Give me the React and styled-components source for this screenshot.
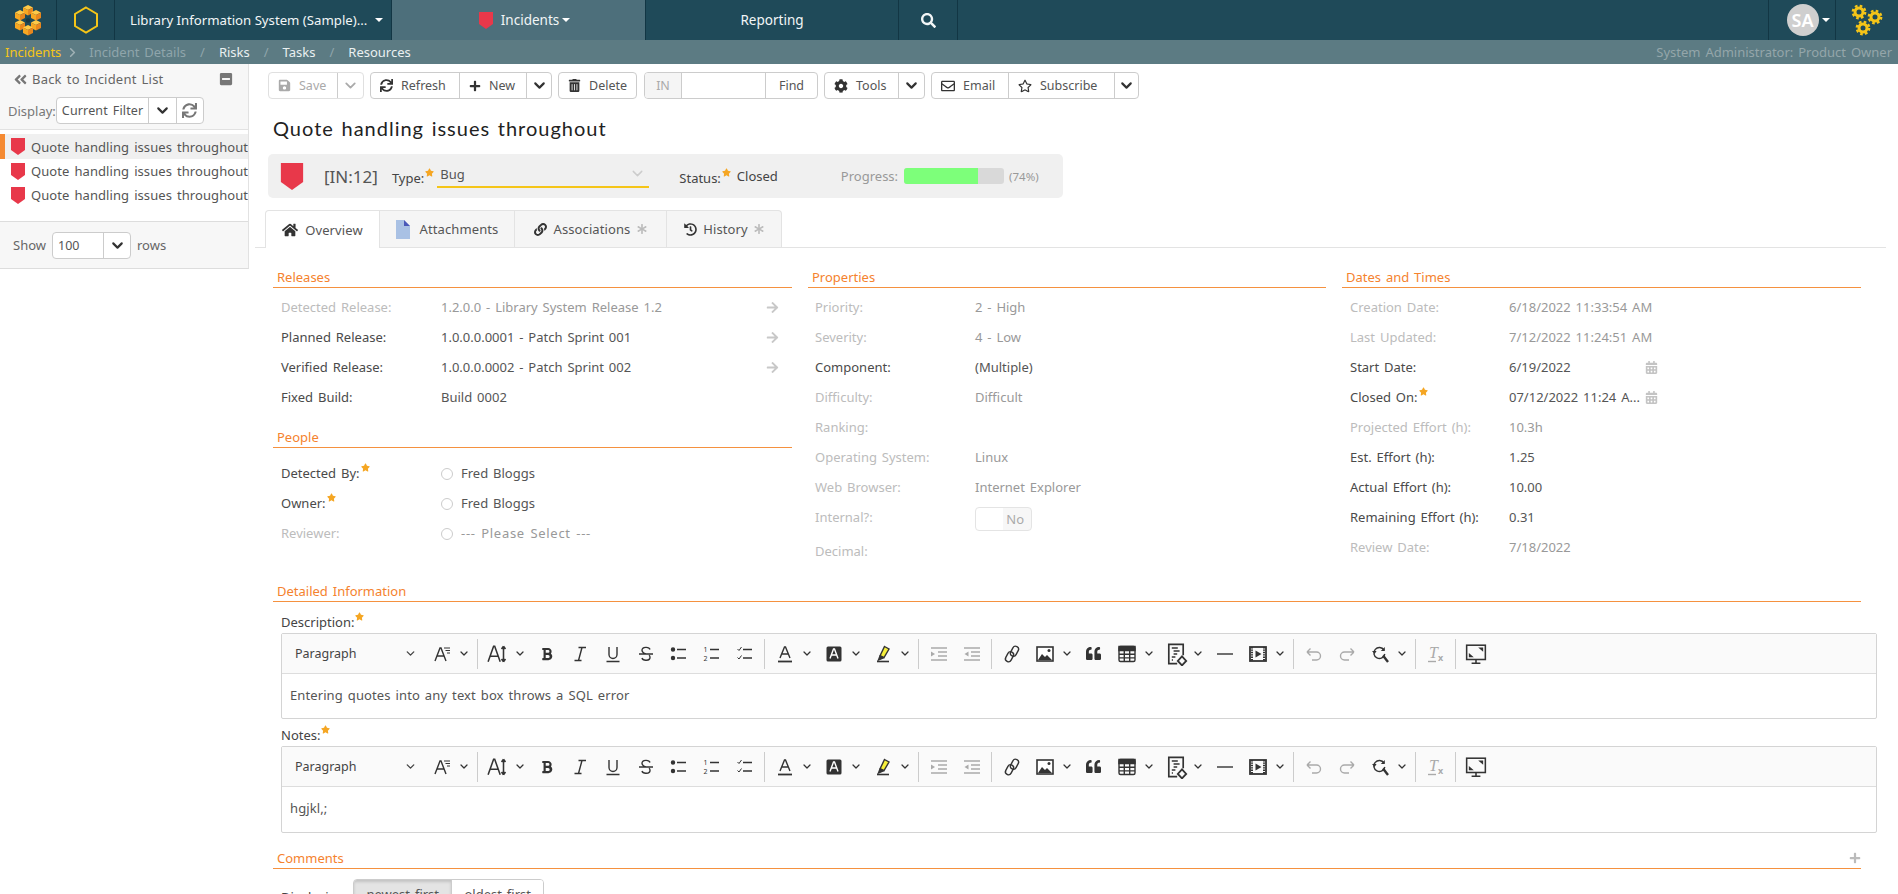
import React from 'react';
import styled, { createGlobalStyle } from 'styled-components';
import { ChevronDown, ChevronRight } from 'lucide-react';
import {
  FaSave, FaSync, FaPlus, FaTrashAlt, FaCog, FaRegEnvelope, FaRegStar, FaHome, FaLink, FaHistory, FaBold,
  FaSearch, FaAngleDoubleLeft, FaMinusSquare, FaCalendarAlt, FaArrowRight, FaAsterisk, FaStar, FaQuoteLeft,
} from 'react-icons/fa';

const GlobalStyle = createGlobalStyle`
  html, body {
    margin: 0;
    height: 100%;
    overflow: hidden;
    background: #fff;
  }
  body {
    font-family: "Noto Sans", "Open Sans", sans-serif;
    font-size: 13px;
    word-spacing: 1.5px;
    color: #444;
  }
  * { box-sizing: border-box; }
`;

const Page = styled.div`
  height: 894px;
  overflow: hidden;
  display: flex;
  flex-direction: column;
`;

const NavBar = styled.div`
  display: flex;
  height: 40px;
  background: #1f4a59;
  color: #fff;
  flex: none;
`;

const NavItem = styled.div`
  width: ${p => p.$w}px;
  display: flex;
  align-items: center;
  justify-content: ${p => p.$left ? 'flex-start' : 'center'};
  gap: ${p => p.$gap ?? 5}px;
  padding-left: ${p => p.$pl ?? (p.$left ? 15 : 0)}px;
  border-right: 1px solid #123644;
  background: ${p => p.$active ? '#4d6f7b' : 'transparent'};
  font-size: ${p => p.$left ? 13.2 : 13.5}px;
  word-spacing: ${p => p.$left ? 0 : 1.5}px;
  color: #f2f6f7;
  white-space: nowrap;
`;

const NavSpacer = styled.div`
  flex: 1;
  border-right: 1px solid #123644;
`;

const Caret = styled.span`
  width: 0;
  height: 0;
  border-left: 4px solid transparent;
  border-right: 4px solid transparent;
  border-top: 4px solid #fff;
  margin-left: ${p => p.$ml || 0}px;
`;

const Avatar = styled.div`
  width: 32px;
  height: 32px;
  border-radius: 50%;
  background: #cfcfcf;
  color: #fff;
  font-size: 18px;
  font-weight: 600;
  display: flex;
  align-items: center;
  justify-content: center;
`;

const SubBar = styled.div`
  display: flex;
  align-items: center;
  height: 24px;
  flex: none;
  background: #5c7b83;
  padding: 0 6px 0 5px;
  font-size: 13px;
`;

const Crumb = styled.span`
  color: ${p => p.$color || '#eaf0f1'};
`;

const Slash = styled.span`
  color: #8fa5ab;
  margin: 0 14px;
`;

const SubBarUser = styled.span`
  margin-left: auto;
  color: #94a6aa;
`;

const Body = styled.div`
  display: flex;
  flex: 1;
  min-height: 0;
`;

const Side = styled.aside`
  width: 249px;
  flex: none;
  align-self: flex-start;
  border-right: 1px solid #e2e2e2;
  border-bottom: 1px solid #ddd;
  background: #f7f7f7;
`;

const SideTop = styled.div`
  height: 66px;
  padding: 7px 0 0 8px;
  border-bottom: 1px solid #e2e2e2;
`;

const BackRow = styled.div`
  display: flex;
  align-items: center;
  height: 16px;
  padding: 0 15px 0 5px;
  color: #666;
  gap: 4px;
  letter-spacing: 0.2px;
  svg:first-child { font-size: 15px; color: #777; }
  svg:last-child { margin-left: auto; font-size: 14px; color: #777; }
`;

const DisplayRow = styled.div`
  display: flex;
  align-items: center;
  margin-top: 10px;
  color: #777;
`;

const ButtonGroup = styled.div`
  display: flex;
  height: ${p => p.$h || 27}px;
  width: ${p => p.$w ? p.$w + 'px' : 'auto'};
  flex: none;
  border: 1px solid ${p => p.$faded ? '#e0e0e0' : '#ccc'};
  border-radius: 4px;
  background: #fff;
  overflow: hidden;
`;

const GroupCell = styled.div`
  width: ${p => p.$w}px;
  flex: none;
  display: flex;
  align-items: center;
  justify-content: ${p => p.$center ? 'center' : 'flex-start'};
  gap: 8px;
  padding-left: ${p => p.$center ? 0 : p.$pl ?? 9}px;
  font-size: 12.5px;
  color: ${p => p.$faded ? '#aaa' : '#555'};
  background: ${p => p.$bg || 'transparent'};
  border-right: ${p => p.$last ? 'none' : '1px solid #ccc'};
  white-space: nowrap;
  svg { flex: none; color: ${p => p.$faded ? '#aaa' : '#333'}; }
`;

const SideList = styled.div`
  background: #fff;
  height: 91px;
  padding-top: 4px;
`;

const SideRow = styled.div`
  display: flex;
  align-items: center;
  height: ${p => p.$sel ? 25 : 24}px;
  gap: 6px;
  padding-left: 11px;
  overflow: hidden;
  white-space: nowrap;
  color: #555;
  background: ${p => p.$sel ? '#f0f0f0' : 'transparent'};
  box-shadow: ${p => p.$sel ? 'inset 5px 0 0 #f58a32' : 'none'};
  letter-spacing: 0.08px;
`;

const SideFoot = styled.div`
  height: 47px;
  display: flex;
  align-items: center;
  gap: 6px;
  padding: 0 13px;
  border-top: 1px solid #ddd;
  color: #666;
`;

const Main = styled.main`
  flex: 1;
  min-width: 0;
  padding: 8px 13px 0 6px;
`;

const ToolBar = styled.div`
  display: flex;
  gap: 6px;
  padding-left: 13px;
`;

const Title = styled.h1`
  margin: 16px 0 0 18px;
  height: 27px;
  line-height: 27px;
  font-family: Lato, sans-serif;
  font-weight: 400;
  font-size: 20px;
  letter-spacing: 1px;
  color: #222;
`;

const InfoBar = styled.div`
  width: 795px;
  height: 44px;
  margin: 12px 0 0 13px;
  background: #f0f0f0;
  border-radius: 5px;
  display: flex;
  align-items: center;
  position: relative;
`;

const Ref = styled.span`
  font-size: 17px;
  color: #555;
  margin: 0 14px 0 18px;
`;

const Field = styled.span`
  color: ${p => p.$muted ? '#999' : '#444'};
  margin-left: ${p => p.$ml || 0}px;
  margin-top: ${p => p.$mt || 0}px;
`;

const Req = styled(FaStar)`
  color: #f5a623;
  font-size: 9px;
  vertical-align: 6px;
  margin-left: 1px;
`;

const TypeBox = styled.div`
  width: 212px;
  height: 26px;
  margin: -3px 0 0 3px;
  padding: 0 3px;
  border-bottom: 2px solid #f5c518;
  display: flex;
  align-items: center;
  justify-content: space-between;
  color: #555;
`;

const ProgressTrack = styled.div`
  width: 100px;
  height: 16px;
  margin: 0 5px 0 6px;
  background: #d9d9d9;
  border-radius: 3px;
  overflow: hidden;
`;

const ProgressFill = styled.div`
  height: 100%;
  background: #7dff7a;
`;

const Tabs = styled.div`
  display: flex;
  height: 38px;
  margin-top: 12px;
  padding-left: 10px;
  border-bottom: 1px solid #e3e3e3;
  width: 1631px;
  margin-left: 0;
`;

const Tab = styled.div`
  width: ${p => p.$w}px;
  height: ${p => p.$active ? 38 : 37}px;
  display: flex;
  align-items: center;
  justify-content: center;
  gap: ${p => p.$gap || 6}px;
  background: ${p => p.$active ? '#fff' : '#f5f5f5'};
  border: 1px solid #e3e3e3;
  border-width: 1px 1px 0 ${p => p.$first ? 1 : 0}px;
  border-radius: ${p => p.$first ? '4px 0 0 0' : p.$last ? '0 4px 0 0' : '0'};
  color: #555;
  letter-spacing: 0.1px;
`;

const Columns = styled.div`
  display: grid;
  grid-template-columns: 519px 518px 519px;
  column-gap: 16px;
  margin: 18px 0 0 18px;
`;

const SectionTitle = styled.div`
  height: 22px;
  line-height: 20px;
  margin-top: ${p => p.$mt || 0}px;
  padding-left: 4px;
  font-size: 13px;
  color: #f5822e;
  border-bottom: 1px solid #f5913f;
  display: flex;
  justify-content: space-between;
  align-items: center;
`;

const RowList = styled.div`
  padding-top: ${p => p.$pt || 4}px;
`;

const Row = styled.div`
  display: flex;
  height: ${p => p.$h || 30}px;
  line-height: 30px;
  padding-left: ${p => p.$pl || 8}px;
  align-items: flex-start;
`;

const Label = styled.div`
  width: ${p => p.$w || 160}px;
  flex: none;
  color: ${p => p.$on ? '#4a4a4a' : '#bcbcbc'};
`;

const Value = styled.div`
  flex: 1;
  display: flex;
  align-items: center;
  height: 30px;
  color: ${p => p.$faded ? '#999' : '#555'};
  letter-spacing: ${p => p.$wide ? 0.7 : 0}px;
`;

const ArrowCell = styled(FaArrowRight)`
  margin-left: auto;
  margin-right: 13px;
  font-size: 13px;
  color: #c8c8c8;
`;

const Radio = styled.span`
  width: 12px;
  height: 12px;
  border-radius: 50%;
  border: 1px solid #ccc;
  margin: 2px 8px 0 0;
  flex: none;
`;

const Toggle = styled.div`
  width: 57px;
  height: 24px;
  margin-top: 5px;
  border: 1px solid #e4e4e4;
  border-radius: 4px;
  display: flex;
  align-items: center;
  justify-content: flex-end;
  padding-right: 7px;
  line-height: 1;
  color: #aaa;
  background: linear-gradient(90deg, #fff 50%, #f7f7f7 50%);
`;

const DateText = styled.span`
  width: ${p => p.$w}px;
  white-space: nowrap;
  flex: none;
`;

const CalIcon = styled(FaCalendarAlt)`
  font-size: 13px;
  color: #c4c4c4;
`;

const Wide = styled.div`
  width: 1588px;
  margin-left: 18px;
`;

const FieldLabel = styled.div`
  height: 20px;
  line-height: 20px;
  margin: ${p => p.$mt || 0}px 0 1px 8px;
  color: #444;
`;

const Editor = styled.div`
  margin-left: 8px;
  width: 1596px;
  border: 1px solid #d4d4d4;
  border-radius: 2px;
`;

const EditorBar = styled.div`
  height: 40px;
  display: flex;
  align-items: center;
  background: #fafafa;
  border-bottom: 1px solid #ddd;
  color: #333;
`;

const ParagraphPick = styled.div`
  width: 142px;
  margin-left: 1px;
  padding: 0 8px 0 12px;
  display: flex;
  align-items: center;
  justify-content: space-between;
  font-size: 12.5px;
  color: #444;
`;

const Tool = styled.div`
  width: 33px;
  height: 32px;
  flex: none;
  display: flex;
  align-items: center;
  justify-content: center;
  color: ${p => p.$off ? '#aaa' : '#333'};
`;

const Chev = styled.div`
  width: 12px;
  margin-right: 4px;
  flex: none;
  display: flex;
  justify-content: center;
  color: #333;
`;

const Sep = styled.div`
  width: 1px;
  height: 30px;
  margin: 0 3px;
  flex: none;
  background: #ccc;
`;

const EditorText = styled.div`
  height: ${p => p.$h}px;
  padding: 10px 8px 0;
  line-height: 22px;
  color: #555;
  letter-spacing: 0.1px;
`;

const CommentRow = styled.div`
  display: flex;
  align-items: flex-start;
  gap: 5px;
  margin: 10px 0 0 8px;
  line-height: 36px;
`;

const SortBtn = styled.div`
  width: ${p => p.$w}px;
  height: 28px;
  line-height: 28px;
  text-align: center;
  color: #555;
  background: ${p => p.$on ? '#e4e4e4' : '#fff'};
  box-shadow: ${p => p.$on ? 'inset 0 2px 3px rgba(0,0,0,.15)' : 'none'};
  border-right: ${p => p.$on ? '1px solid #ccc' : 'none'};
`;

const Plus = styled(FaPlus)`
  font-size: 12px;
  color: #bbb;
  margin-right: 0;
`;

const Ico = styled.svg.attrs(p => ({
  width: p.$s || 20,
  height: p.$s || 20,
  viewBox: '0 0 20 20',
  fill: 'none',
  stroke: 'currentColor',
  strokeWidth: 1.4,
}))`
  display: block;
`;

const Shield = ({ w = 14, h = 17 }) => (
  <svg width={w} height={h} viewBox="0 0 14 17" style={{ flex: 'none' }}>
    <path d="M0 0h14v12l-7 5-7-5z" fill="#e8384a" />
  </svg>
);

const Cube = ({ x, y, c = '#f7a823' }) => (
  <g transform={`translate(${x} ${y})`}>
    <path d="M0-5 5-2.5 0 0-5-2.5z" fill="#ffc947" />
    <path d="M-5-2.5 0 0V5.5L-5 3z" fill={c} />
    <path d="M5-2.5 0 0V5.5L5 3z" fill="#e8871e" />
  </g>
);

const Logo = () => (
  <svg width="30" height="33" viewBox="0 0 30 33">
    <Cube x={15} y={6} />
    <Cube x={7} y={11} />
    <Cube x={23} y={11} />
    <Cube x={7} y={21} />
    <Cube x={23} y={21} />
    <Cube x={15} y={26} />
    <circle cx="15" cy="16.5" r="2.2" fill="#173a46" />
  </svg>
);

const HexMark = () => (
  <svg width="26" height="28" viewBox="0 0 26 28">
    <path d="M13 1.5 24 8v12l-11 6.5L2 20V8z" fill="none" stroke="#f5c518" strokeWidth="2" />
  </svg>
);

const Gear = ({ x, y }) => (
  <g transform={`translate(${x} ${y})`} fill="none" stroke="#f5c518">
    <circle r="4" strokeWidth="3" />
    <circle r="6.2" strokeWidth="2.4" strokeDasharray="2.6 2.27" />
  </g>
);

const Gears = () => (
  <svg width="34" height="40" viewBox="0 0 34 40">
    <Gear x={9} y={12} />
    <Gear x={25} y={17} />
    <Gear x={13} y={28} />
  </svg>
);

const FileIcon = () => (
  <svg width="14" height="19" viewBox="0 0 14 19">
    <path d="M0 0h8l6 6v13H0z" fill="#a9c1e4" />
    <path d="M8 0l6 6H8z" fill="#4a58b8" />
  </svg>
);

const SmallChevron = () => <ChevronDown size={13} strokeWidth={2.5} />;
const DownBold = () => <ChevronDown size={17} strokeWidth={3} color="#333" />;

const StyleIcon = () => (
  <Ico><path d="M3 17 8 4h1l5 13M5 12h7" /><path d="M12 4h6M13.5 6.5H18M15 9h3" strokeWidth="1" /></Ico>
);
const SizeIcon = () => (
  <Ico $s={22}><path d="M1 17 6 3h1l5 14M3 12h7" /><path d="M15 3v14M15 3l-1.8 2.5M15 3l1.8 2.5M15 17l-1.8-2.5M15 17l1.8-2.5" /></Ico>
);
const ItalicIcon = () => <Ico strokeWidth="1.3"><path d="M8.5 3.5h7.5M12 3.5 8.5 16.5M4.5 16.5h7" /></Ico>;
const UnderlineIcon = () => <Ico><path d="M6 3v7.5a4 4 0 0 0 8 0V3M3.5 17.5h13" /></Ico>;
const StrikeIcon = () => (
  <Ico><path d="M14 5.5c-.8-3-8-3-8 .8 0 2 2 3 4 3.7M6 14c.8 3.2 8.2 3 8-.8 0-.8-.3-1.5-1-2M3 10h14" /></Ico>
);
const BulletIcon = () => (
  <Ico strokeWidth="1.6"><circle cx="4" cy="5.5" r="1.5" fill="currentColor" /><circle cx="4" cy="14" r="1.5" fill="currentColor" /><path d="M8 5.5h9M8 14h9" /></Ico>
);
const NumberIcon = () => (
  <Ico strokeWidth="1.6">
    <text x="1.5" y="8" fontSize="7" fill="currentColor" stroke="none" fontFamily="Noto Sans">1</text>
    <text x="1.5" y="17" fontSize="7" fill="currentColor" stroke="none" fontFamily="Noto Sans">2</text>
    <path d="M8 5.5h9M8 14h9" />
  </Ico>
);
const TodoIcon = () => (
  <Ico strokeWidth="1.3"><path d="M2.5 5 4 6.5 6.5 3M2.5 13.5 4 15l2.5-3.5" strokeWidth="1" /><path d="M8 5.5h9M8 14h9" strokeWidth="1.6" /></Ico>
);
const FontColorIcon = () => (
  <Ico><path d="M5 14 9.5 3h1L15 14M6.7 10h6.6" /><path d="M3 17.5h14" strokeWidth="1.8" /></Ico>
);
const FontBgIcon = () => (
  <Ico><rect x="2.5" y="2.5" width="15" height="15" rx="1.5" fill="#333" stroke="none" /><path d="M6 14.5 9.5 5h1l3.5 9.5M7.2 11h5.6" stroke="#fff" /></Ico>
);
const HighlightIcon = () => (
  <Ico>
    <path d="M11.5 2.5 16 5l-5 8.5-3.8-2z" fill="#f6ef3a" stroke="#333" />
    <path d="M7.2 11.5 5.5 16l5.5-2.5" fill="#333" />
    <path d="M4 17.5h12" strokeWidth="1.6" />
  </Ico>
);
const IndentIcon = () => (
  <Ico strokeWidth="1.2"><path d="M2 4h16M9 8h9M9 12h9M2 16h16" /><path d="M2 7.5 6 10l-4 2.5z" fill="currentColor" stroke="none" /></Ico>
);
const OutdentIcon = () => (
  <Ico strokeWidth="1.2"><path d="M2 4h16M9 8h9M9 12h9M2 16h16" /><path d="M6.5 7.5 2.5 10l4 2.5z" fill="currentColor" stroke="none" /></Ico>
);
const LinkIcon = () => (
  <Ico strokeWidth="1.2">
    <rect x="9.5" y="2" width="6" height="10.5" rx="3" transform="rotate(28 12.5 7.2)" />
    <rect x="4.5" y="7.5" width="6" height="10.5" rx="3" transform="rotate(28 7.5 12.8)" />
  </Ico>
);
const ImageIcon = () => (
  <Ico>
    <rect x="2" y="3" width="16" height="14" fill="#fff" stroke="#333" strokeWidth="1.6" />
    <path d="M3 16l4-6 3 3 2-2 5 5z" fill="#333" stroke="none" />
    <circle cx="14" cy="6.5" r="1.5" fill="#333" stroke="none" />
  </Ico>
);
const TableIcon = () => (
  <Ico strokeWidth="1.1">
    <rect x="2" y="2.5" width="16" height="15" rx="1.5" stroke="#333" />
    <path d="M2 2.5h16v4H2z" fill="#333" />
    <path d="M7.3 6.5v11M12.7 6.5v11M2 10.2h16M2 13.9h16" />
  </Ico>
);
const SourceIcon = () => (
  <Ico $s={24} strokeWidth="1">
    <path d="M11 18H4V2h12v9" />
    <path d="M6.5 5h5M8 7.5h5M8 10h3M6.5 12.5h3M6.5 15h1" />
    <path d="M15 12 11.5 15.8 15 19.5 18.5 15.8z" strokeWidth="1.5" />
  </Ico>
);
const RuleIcon = () => <Ico strokeWidth="2"><path d="M2 10h16" /></Ico>;
const MediaIcon = () => (
  <Ico>
    <rect x="2" y="3" width="16" height="14" stroke="#333" strokeWidth="1.8" />
    <path d="M4 3v14M16 3v14" strokeWidth="2" strokeDasharray="1.4 1" />
    <path d="M7.5 6.5 13.5 10l-6 3.5z" fill="#333" stroke="none" />
  </Ico>
);
const UndoIcon = () => <Ico strokeWidth="1.2"><path d="M3 8h9.5a3.6 3.6 0 0 1 0 8H8M3 8l3.5-3.5M3 8l3.5 3.5" /></Ico>;
const RedoIcon = () => <Ico strokeWidth="1.2"><path d="M17 8H7.5a3.6 3.6 0 0 0 0 8H12M17 8l-3.5-3.5M17 8l-3.5 3.5" /></Ico>;
const FindIcon = () => (
  <Ico strokeWidth="1.7">
    <path d="M14 6a5.5 5.5 0 1 0 .8 4" />
    <path d="M13 11.5 18 18" strokeWidth="2.4" />
    <path d="M2 7l2.6 3 2-3z M14.8 3v4h-4z" fill="currentColor" stroke="none" />
  </Ico>
);
const ClearIcon = () => (
  <Ico strokeWidth="1">
    <text x="3" y="14" fontSize="16" fontStyle="italic" fontFamily="Liberation Serif" fill="currentColor" stroke="none">T</text>
    <text x="12" y="17" fontSize="9" fontWeight="700" fontFamily="Noto Sans" fill="currentColor" stroke="none">x</text>
    <path d="M2 17.5h8" />
  </Ico>
);
const FullIcon = () => (
  <Ico $s={22} strokeWidth="1.5">
    <rect x="1.5" y="2" width="17" height="13" />
    <path d="M10 15v3M6 18.5h8" />
    <path d="M12 4h4.5v4zM8 13H3.5V9z" fill="currentColor" stroke="none" />
  </Ico>
);

const EditorToolbar = () => (
  <EditorBar>
    <ParagraphPick>Paragraph <SmallChevron /></ParagraphPick>
    <Tool><StyleIcon /></Tool><Chev><SmallChevron /></Chev>
    <Sep />
    <Tool><SizeIcon /></Tool><Chev><SmallChevron /></Chev>
    <Tool><FaBold size={14} /></Tool>
    <Tool><ItalicIcon /></Tool>
    <Tool><UnderlineIcon /></Tool>
    <Tool><StrikeIcon /></Tool>
    <Tool><BulletIcon /></Tool>
    <Tool><NumberIcon /></Tool>
    <Tool><TodoIcon /></Tool>
    <Sep />
    <Tool><FontColorIcon /></Tool><Chev><SmallChevron /></Chev>
    <Tool><FontBgIcon /></Tool><Chev><SmallChevron /></Chev>
    <Tool><HighlightIcon /></Tool><Chev><SmallChevron /></Chev>
    <Sep />
    <Tool $off><IndentIcon /></Tool>
    <Tool $off><OutdentIcon /></Tool>
    <Sep />
    <Tool><LinkIcon /></Tool>
    <Tool><ImageIcon /></Tool><Chev><SmallChevron /></Chev>
    <Tool><FaQuoteLeft size={15} /></Tool>
    <Tool><TableIcon /></Tool><Chev><SmallChevron /></Chev>
    <Tool><SourceIcon /></Tool><Chev><SmallChevron /></Chev>
    <Tool><RuleIcon /></Tool>
    <Tool><MediaIcon /></Tool><Chev><SmallChevron /></Chev>
    <Sep />
    <Tool $off><UndoIcon /></Tool>
    <Tool $off><RedoIcon /></Tool>
    <Tool><FindIcon /></Tool><Chev><SmallChevron /></Chev>
    <Sep />
    <Tool $off><ClearIcon /></Tool>
    <Sep />
    <Tool><FullIcon /></Tool>
  </EditorBar>
);

const releases = [
  ['Detected Release:', '1.2.0.0 - Library System Release 1.2', false, true],
  ['Planned Release:', '1.0.0.0.0001 - Patch Sprint 001', true, true],
  ['Verified Release:', '1.0.0.0.0002 - Patch Sprint 002', true, true],
  ['Fixed Build:', 'Build 0002', true, false],
];

const people = [
  ['Detected By:', 'Fred Bloggs', true],
  ['Owner:', 'Fred Bloggs', true],
  ['Reviewer:', '--- Please Select ---', false],
];

const properties = [
  ['Priority:', '2 - High', false],
  ['Severity:', '4 - Low', false],
  ['Component:', '(Multiple)', true],
  ['Difficulty:', 'Difficult', false],
  ['Ranking:', '', false],
  ['Operating System:', 'Linux', false],
  ['Web Browser:', 'Internet Explorer', false],
];

const dates = [
  ['Creation Date:', '6/18/2022 11:33:54 AM'],
  ['Last Updated:', '7/12/2022 11:24:51 AM'],
  ['Start Date:', '6/19/2022', true, true],
  ['Closed On:', '07/12/2022 11:24 A...', true, true, true],
  ['Projected Effort (h):', '10.3h'],
  ['Est. Effort (h):', '1.25', true],
  ['Actual Effort (h):', '10.00', true],
  ['Remaining Effort (h):', '0.31', true],
  ['Review Date:', '7/18/2022'],
];

export default function App() {
  return (
    <Page>
      <GlobalStyle />
      <NavBar>
        <NavItem $w={57}><Logo /></NavItem>
        <NavItem $w={58}><HexMark /></NavItem>
        <NavItem $w={277} $left>Library Information System (Sample)... <Caret $ml={3} /></NavItem>
        <NavItem $w={254} $active $pl={12} $gap={3}><Shield />&nbsp;Incidents<Caret /></NavItem>
        <NavItem $w={253}>Reporting</NavItem>
        <NavItem $w={59}><FaSearch size={15} /></NavItem>
        <NavSpacer />
        <NavItem $w={67} $pl={12} $gap={3}><Avatar>SA</Avatar><Caret /></NavItem>
        <NavItem $w={62} style={{ borderRight: 'none' }}><Gears /></NavItem>
      </NavBar>
      <SubBar>
        <Crumb $color="#f5c518">Incidents</Crumb>
        <ChevronRight size={15} strokeWidth={2.5} color="#9fb1b5" style={{ margin: '0 9px 0 4px' }} />
        <Crumb $color="#8fa5ab">Incident Details</Crumb>
        <Slash>/</Slash><Crumb>Risks</Crumb>
        <Slash>/</Slash><Crumb>Tasks</Crumb>
        <Slash>/</Slash><Crumb>Resources</Crumb>
        <SubBarUser>System Administrator: Product Owner</SubBarUser>
      </SubBar>
      <Body>
        <Side>
          <SideTop>
            <BackRow><FaAngleDoubleLeft /> Back to Incident List <FaMinusSquare /></BackRow>
            <DisplayRow>
              Display:
              <ButtonGroup $w={148}>
                <GroupCell $w={92} $pl={5} style={{ letterSpacing: 0.15 }}>Current Filter</GroupCell>
                <GroupCell $w={28} $center><DownBold /></GroupCell>
                <GroupCell $w={26} $center $last><FaSync size={15} style={{ color: '#777' }} /></GroupCell>
              </ButtonGroup>
            </DisplayRow>
          </SideTop>
          <SideList>
            <SideRow $sel><Shield />Quote handling issues throughout</SideRow>
            <SideRow><Shield />Quote handling issues throughout</SideRow>
            <SideRow><Shield />Quote handling issues throughout</SideRow>
          </SideList>
          <SideFoot>
            Show
            <ButtonGroup $w={79}>
              <GroupCell $w={51} $pl={5}>100</GroupCell>
              <GroupCell $w={26} $center $last><DownBold /></GroupCell>
            </ButtonGroup>
            rows
          </SideFoot>
        </Side>
        <Main>
          <ToolBar>
            <ButtonGroup $faded>
              <GroupCell $w={69} $faded><FaSave size={13} /> Save</GroupCell>
              <GroupCell $w={25} $center $last $faded><ChevronDown size={17} strokeWidth={2.5} /></GroupCell>
            </ButtonGroup>
            <ButtonGroup>
              <GroupCell $w={89}><FaSync size={13} /> Refresh</GroupCell>
              <GroupCell $w={67}><FaPlus size={12} /> New</GroupCell>
              <GroupCell $w={24} $center $last><DownBold /></GroupCell>
            </ButtonGroup>
            <ButtonGroup>
              <GroupCell $w={77} $last><FaTrashAlt size={13} /> Delete</GroupCell>
            </ButtonGroup>
            <ButtonGroup style={{ marginLeft: 1 }}>
              <GroupCell $w={37} $center $bg="#f5f5f5" $faded>IN</GroupCell>
              <GroupCell $w={84} />
              <GroupCell $w={51} $center $last>Find</GroupCell>
            </ButtonGroup>
            <ButtonGroup>
              <GroupCell $w={74}><FaCog size={14} /> Tools</GroupCell>
              <GroupCell $w={25} $center $last><DownBold /></GroupCell>
            </ButtonGroup>
            <ButtonGroup>
              <GroupCell $w={77}><FaRegEnvelope size={14} /> Email</GroupCell>
              <GroupCell $w={106}><FaRegStar size={14} /> Subscribe</GroupCell>
              <GroupCell $w={23} $center $last><DownBold /></GroupCell>
            </ButtonGroup>
          </ToolBar>
          <Title>Quote handling issues throughout</Title>
          <InfoBar>
            <span style={{ marginLeft: 10, display: 'flex' }}><Shield w={28} h={27} /></span>
            <Ref>[IN:12]</Ref>
            <Field $mt={2}>Type:<Req /></Field>
            <TypeBox>Bug <ChevronDown size={17} color="#ccc" /></TypeBox>
            <Field $ml={30} $mt={2}>Status:<Req /></Field>
            <Field $ml={6}>Closed</Field>
            <Field $ml={63} $muted>Progress:</Field>
            <ProgressTrack><ProgressFill style={{ width: '74%' }} /></ProgressTrack>
            <Field $muted style={{ fontSize: 11.5 }}>(74%)</Field>
          </InfoBar>
          <Tabs>
            <Tab $w={115} $active $first $gap={7}><FaHome size={16} color="#333" /> Overview</Tab>
            <Tab $w={135} $gap={10}><FileIcon /> Attachments</Tab>
            <Tab $w={152} $gap={7}><FaLink size={13} color="#333" /> Associations <FaAsterisk size={10} color="#bbb" /></Tab>
            <Tab $w={115} $last><FaHistory size={13} color="#333" /> History <FaAsterisk size={10} color="#bbb" /></Tab>
          </Tabs>
          <Columns>
            <div>
              <SectionTitle>Releases</SectionTitle>
              <RowList>
                {releases.map(([label, value, on, arrow]) => (
                  <Row key={label}>
                    <Label $on={on}>{label}</Label>
                    <Value $faded={!on}>{value}{arrow && <ArrowCell />}</Value>
                  </Row>
                ))}
              </RowList>
              <SectionTitle $mt={14}>People</SectionTitle>
              <RowList $pt={10}>
                {people.map(([label, value, on]) => (
                  <Row key={label}>
                    <Label $on={on}>{label}{on && <Req />}</Label>
                    <Value $faded={!on} $wide={!on}><Radio />{value}</Value>
                  </Row>
                ))}
              </RowList>
            </div>
            <div>
              <SectionTitle>Properties</SectionTitle>
              <RowList>
                {properties.map(([label, value, on]) => (
                  <Row key={label} $pl={7}>
                    <Label $on={on}>{label}</Label>
                    <Value $faded={!on}>{value}</Value>
                  </Row>
                ))}
                <Row $pl={7} $h={34}>
                  <Label>Internal?:</Label>
                  <Toggle>No</Toggle>
                </Row>
                <Row $pl={7}><Label>Decimal:</Label></Row>
              </RowList>
            </div>
            <div>
              <SectionTitle>Dates and Times</SectionTitle>
              <RowList>
                {dates.map(([label, value, on, cal, req]) => (
                  <Row key={label} $pl={8}>
                    <Label $w={159} $on={on}>{label}{req && <Req />}</Label>
                    {cal
                      ? <Value><DateText $w={136}>{value}</DateText><CalIcon /></Value>
                      : <Value $faded={!on}>{value}</Value>}
                  </Row>
                ))}
              </RowList>
            </div>
          </Columns>
          <Wide>
            <SectionTitle $mt={14}>Detailed Information</SectionTitle>
            <FieldLabel $mt={10}>Description:<Req /></FieldLabel>
            <Editor>
              <EditorToolbar />
              <EditorText $h={44}>Entering quotes into any text box throws a SQL error</EditorText>
            </Editor>
            <FieldLabel $mt={6}>Notes:<Req /></FieldLabel>
            <Editor>
              <EditorToolbar />
              <EditorText $h={45}>hgjkl,;</EditorText>
            </Editor>
            <SectionTitle $mt={14}>Comments <Plus /></SectionTitle>
            <CommentRow>
              Displaying:
              <ButtonGroup $h={28}>
                <SortBtn $w={98} $on>newest first</SortBtn>
                <SortBtn $w={91}>oldest first</SortBtn>
              </ButtonGroup>
            </CommentRow>
          </Wide>
        </Main>
      </Body>
    </Page>
  );
}
